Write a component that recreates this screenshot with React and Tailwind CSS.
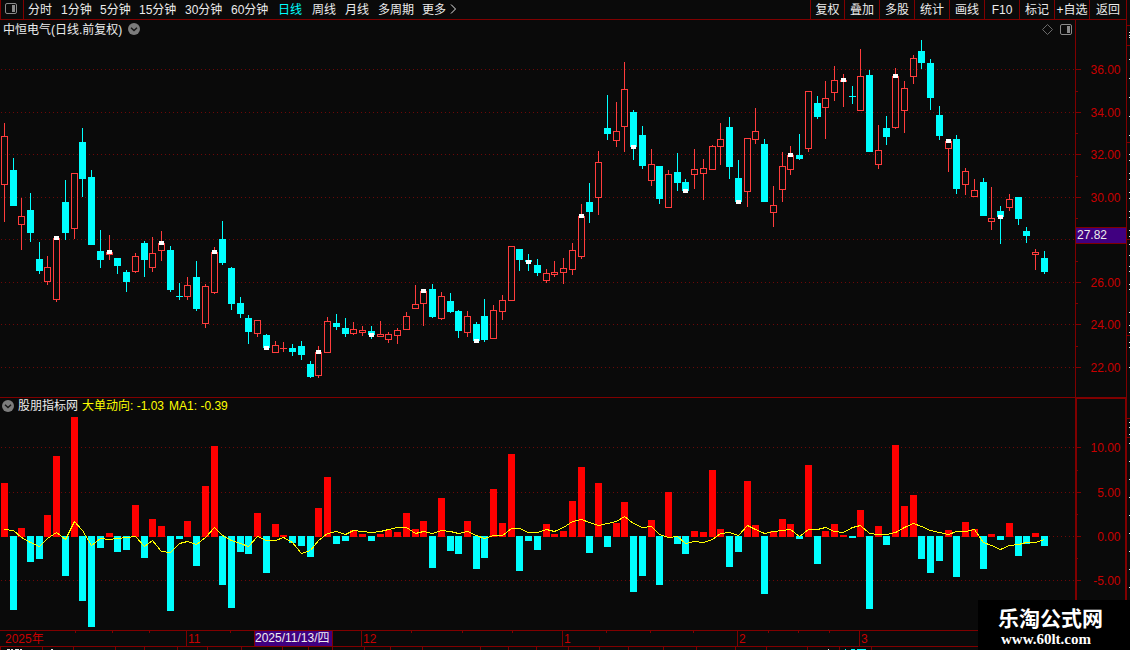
import clsx from 'clsx'

// [direction, high, body top, body bottom, low, marker top]
const CANDLES = [
  ['u', 123, 136, 185, 222], ['d', 158, 170, 206, 206], ['u', 198, 216, 225, 250], ['d', 193, 210, 233, 242],
  ['d', 242, 259, 271, 274], ['u', 256, 267, 282, 285], ['u', 236, 238, 300, 302, 236], ['d', 180, 202, 233, 240],
  ['u', 173, 173, 229, 239], ['d', 128, 142, 179, 197], ['d', 170, 177, 245, 245], ['d', 230, 251, 260, 268],
  ['u', 235, 252, 255, 260, 250], ['d', 258, 258, 266, 274], ['d', 270, 272, 282, 292], ['u', 253, 256, 272, 273],
  ['d', 241, 243, 260, 277], ['u', 237, 253, 268, 272], ['u', 231, 243, 251, 261, 241], ['d', 246, 250, 290, 292],
  ['d', 283, 296, 297, 300], ['u', 277, 285, 297, 300], ['d', 261, 277, 309, 311], ['u', 284, 286, 324, 328],
  ['u', 247, 252, 293, 294, 250], ['d', 221, 239, 263, 265], ['d', 267, 268, 304, 310], ['d', 297, 303, 314, 318],
  ['d', 315, 318, 332, 344], ['u', 320, 320, 334, 337], ['d', 334, 335, 348, 348, 346], ['u', 341, 345, 353, 353],
  ['u', 342, 348, 349, 352], ['d', 344, 348, 352, 356], ['d', 341, 346, 355, 360], ['d', 361, 364, 377, 378],
  ['u', 346, 352, 376, 378, 350], ['u', 317, 321, 353, 353], ['d', 314, 323, 327, 330], ['d', 318, 328, 334, 337],
  ['u', 322, 329, 334, 335], ['u', 326, 330, 333, 336], ['d', 326, 331, 335, 339, 333], ['u', 321, 334, 337, 337],
  ['u', 332, 334, 340, 343], ['u', 328, 330, 336, 344], ['u', 312, 316, 330, 330], ['u', 285, 304, 309, 309],
  ['u', 289, 291, 304, 326, 289], ['d', 284, 289, 317, 318], ['u', 292, 296, 319, 320], ['d', 293, 301, 312, 313],
  ['d', 310, 311, 331, 338], ['u', 311, 316, 333, 337], ['d', 322, 324, 341, 341, 339], ['d', 299, 316, 340, 342],
  ['u', 305, 310, 339, 339], ['u', 295, 300, 312, 320], ['u', 246, 246, 301, 301], ['d', 249, 249, 260, 271],
  ['d', 254, 260, 262, 271, 260], ['d', 259, 265, 273, 276], ['u', 269, 273, 281, 283], ['u', 261, 272, 275, 277],
  ['u', 258, 268, 273, 284], ['u', 243, 250, 270, 275], ['u', 204, 216, 257, 259, 214], ['d', 183, 202, 212, 223],
  ['u', 151, 162, 198, 215], ['d', 95, 128, 134, 140], ['u', 102, 131, 141, 147], ['u', 62, 89, 127, 152],
  ['d', 110, 112, 147, 160, 145], ['d', 126, 135, 166, 169], ['u', 149, 164, 181, 186], ['d', 166, 166, 199, 204],
  ['u', 170, 174, 208, 208], ['d', 153, 172, 183, 191], ['d', 179, 182, 191, 191, 189], ['u', 149, 169, 175, 189],
  ['u', 159, 168, 174, 200], ['u', 145, 146, 170, 170], ['u', 123, 139, 147, 165], ['d', 117, 127, 167, 179],
  ['d', 160, 178, 202, 202, 200], ['u', 138, 138, 192, 207], ['u', 108, 131, 140, 144], ['d', 139, 144, 202, 202],
  ['u', 186, 205, 213, 227], ['u', 152, 166, 190, 202], ['u', 146, 155, 170, 175, 153], ['d', 134, 155, 159, 160],
  ['u', 91, 91, 149, 152], ['d', 96, 103, 117, 119], ['u', 81, 98, 108, 139], ['u', 66, 80, 93, 101],
  ['u', 74, 80, 82, 107, 78], ['d', 86, 96, 97, 104], ['u', 49, 76, 111, 111], ['d', 70, 75, 152, 152],
  ['u', 125, 150, 165, 169], ['d', 116, 128, 137, 145], ['u', 68, 76, 128, 129, 74], ['u', 81, 88, 111, 133],
  ['u', 55, 58, 77, 84], ['d', 40, 51, 63, 69], ['d', 59, 63, 98, 110], ['d', 106, 115, 136, 140],
  ['u', 139, 141, 149, 172, 139], ['d', 135, 139, 189, 194], ['u', 168, 171, 185, 195], ['u', 179, 190, 197, 197],
  ['d', 178, 182, 216, 216], ['u', 187, 218, 222, 230], ['d', 206, 211, 217, 244, 215], ['u', 194, 199, 208, 211],
  ['d', 197, 197, 219, 225], ['d', 227, 231, 236, 243], ['u', 249, 252, 255, 270], ['d', 251, 258, 272, 274],
]

// bar ends: above the zero line is inflow, below is outflow
const BARS = [
  483, 610, 528, 562, 559, 515, 456, 576, 417, 601, 627, 548, 533, 552, 550, 505, 558, 519, 526, 611,
  539, 521, 566, 486, 446, 585, 608, 552, 554, 513, 573, 524, 535, 543, 546, 557, 508, 477, 544, 541,
  530, 534, 541, 534, 530, 532, 513, 529, 521, 568, 498, 551, 554, 521, 569, 558, 489, 523, 454, 571,
  541, 550, 524, 534, 531, 501, 467, 553, 483, 547, 523, 502, 592, 576, 520, 585, 492, 544, 554, 531,
  532, 470, 529, 567, 552, 481, 525, 594, 531, 519, 524, 539, 465, 564, 531, 524, 535, 538, 510, 609,
  526, 545, 445, 506, 495, 559, 573, 561, 530, 577, 522, 529, 569, 534, 540, 523, 556, 544, 533, 546,
]

const MA = [
  529, 530, 537, 542, 546, 538, 532, 539, 521, 530, 545, 538, 539, 538, 537, 536, 546, 540, 551, 552,
  543, 541, 544, 537, 527, 535, 540, 543, 546, 536, 540, 540, 537, 542, 553, 550, 540, 533, 531, 534,
  530, 531, 532, 531, 529, 527, 527, 533, 531, 533, 530, 531, 533, 531, 535, 538, 535, 535, 528, 528,
  532, 532, 529, 531, 527, 521, 519, 522, 525, 523, 521, 516, 523, 527, 526, 534, 537, 536, 543, 541,
  542, 539, 533, 532, 535, 525, 529, 533, 531, 530, 529, 536, 529, 529, 527, 531, 532, 527, 525, 533,
  534, 534, 532, 527, 523, 526, 530, 532, 534, 531, 531, 529, 542, 545, 549, 545, 544, 542, 542, 539,
]

const PERIODS = [
  ['分时', 'w-[33px]'],
  ['1分钟', 'w-[39px]'],
  ['5分钟', 'w-[39px]'],
  ['15分钟', 'w-[46px]'],
  ['30分钟', 'w-[46px]'],
  ['60分钟', 'w-[47px]'],
  ['日线', 'w-[34px]'],
  ['周线', 'w-[33px]'],
  ['月线', 'w-[33px]'],
  ['多周期', 'w-[44px]'],
  ['更多', 'w-[28px]'],
]

const TOOLS = ['复权', '叠加', '多股', '统计', '画线', 'F10', '标记', '+自选', '返回']

const PRICE_TICKS = [[69, '36.00'], [112, '34.00'], [154, '32.00'], [197, '30.00'], [239, ''], [282, '26.00'], [324, '24.00'], [367, '22.00']]
const PRICE_MINOR = [91, 133, 176, 218, 261, 303, 346]
const FLOW_TICKS = [[447, '10.00'], [492, '5.00'], [536, '0.00'], [580, '-5.00']]
const FLOW_MINOR = [470, 514, 558]

const MONTHS = [
  ['2025年', 'w-[186px] pl-[5px]'],
  ['11', 'w-[175px] border-l pl-px'],
  ['12', 'w-[201px] border-l pl-px'],
  ['1', 'w-[175px] border-l pl-px'],
  ['2', 'w-[122px] border-l pl-px'],
  ['3', 'w-[216px] border-l pl-px'],
]
const DATE_TICKS = [75, 112, 149, 230, 411, 462, 512, 606, 650, 693, 768, 798, 829]
const TAB_TICKS = [0, 42, 73, 115, 144, 177, 207, 241, 282, 308, 332, 364, 390, 422, 480, 508, 536, 568, 599, 628, 663, 696, 735, 766, 807, 839, 871]

const EDGE_RED = [25, 45, 142, 239, 335, 418, 437]
const EDGE_WHITE = [
  32, 35, 37, 59, 78, 97, 116, 135, 154, 160, 173, 179, 192, 198, 211, 217, 230, 236, 244, 255, 266, 271, 284, 289,
  312, 325, 332, 342, 347, 367, 422, 427, 434, 443, 461, 479, 497, 515, 533, 551, 569, 587,
]

const cx = (i) => Math.floor(4.29 + i * 8.7395)

function GridLines({ ys }) {
  return ys.map((y) => (
    <line key={y} x1="1" x2="1075" y1={y + 0.5} y2={y + 0.5} stroke="#6e0808" strokeDasharray="1 3" />
  ))
}

function Candle({ x, data }) {
  const [dir, high, top, bottom, low, mark] = data
  const up = dir === 'u'
  const color = up ? '#ff3c3c' : '#00ffff'
  return (
    <g>
      {high < top && <rect x={x} y={high} width="1" height={top - high} fill={color} />}
      {low > bottom && <rect x={x} y={bottom} width="1" height={low - bottom} fill={color} />}
      {up && bottom - top > 2 ? (
        <rect x={x - 2.5} y={top + 0.5} width="6" height={bottom - top - 1} fill="none" stroke={color} />
      ) : (
        <rect x={x - 3} y={top} width="7" height={bottom - top} fill={color} />
      )}
      {mark && <rect x={x - 2} y={mark} width="5" height="4" fill="#fff" />}
    </g>
  )
}

function PriceChart() {
  return (
    <svg className="block" width="1075" height="377" viewBox="0 20 1075 377" shapeRendering="crispEdges">
      <GridLines ys={PRICE_TICKS.map((t) => t[0])} />
      {CANDLES.map((c, i) => (
        <Candle key={i} x={cx(i)} data={c} />
      ))}
    </svg>
  )
}

function FlowChart() {
  return (
    <svg className="block" width="1075" height="232" viewBox="0 398 1075 232" shapeRendering="crispEdges">
      <GridLines ys={FLOW_TICKS.map((t) => t[0])} />
      {BARS.map((y, i) =>
        y < 537 ? (
          <rect key={i} x={cx(i) - 3} y={y} width="7" height={537 - y} fill="#ff0000" />
        ) : (
          <rect key={i} x={cx(i) - 3} y="536" width="7" height={y - 536} fill="#00ffff" />
        )
      )}
      <polyline points={MA.map((y, i) => `${cx(i) + 0.5},${y + 0.5}`).join(' ')} fill="none" stroke="#ffff00" />
    </svg>
  )
}

function Axis({ top, height, ticks, minor, className }) {
  return (
    <svg className={clsx('block shrink-0', className)} width="50" height={height} viewBox={`0 ${top} 50 ${height}`}>
      {ticks.map(([y, label]) => (
        <g key={y}>
          <rect x="0" y={y} width="5" height="1" fill="#800000" />
          <text x="44.5" y={y + 5} textAnchor="end" fontSize="12" fill="#c80000">{label}</text>
        </g>
      ))}
      {minor.map((y) => (
        <rect key={y} x="0" y={y} width="2" height="1" fill="#800000" />
      ))}
    </svg>
  )
}

function PanelIcon({ color, className }) {
  return (
    <svg className={className} width="12" height="11" viewBox="0 0 12 11">
      <rect x="0.5" y="0.5" width="11" height="10" rx="1.5" fill="none" stroke={color} />
      <rect x="7" y="2" width="3" height="7" fill={color} />
    </svg>
  )
}

function Dropdown({ className }) {
  return (
    <svg className={className} width="12" height="12" viewBox="0 0 12 12">
      <circle cx="6" cy="6" r="6" fill="#7c7c7c" />
      <path d="M3 4.8 L6 7.6 L9 4.8" fill="none" stroke="#161616" strokeWidth="1.4" />
    </svg>
  )
}

export default function App() {
  return (
    <div className="relative flex h-[650px] w-[1130px] overflow-hidden bg-[#0a0a0a] font-['Liberation_Sans','Noto_Sans_CJK_SC',sans-serif] text-[12px] leading-none text-[#ececec]">
      <div className="flex w-[1127px] shrink-0 flex-col">
        <header className="flex h-[20px] shrink-0 border-b border-r border-[#800000] whitespace-nowrap">
          <div className="flex w-[24px] shrink-0 border-x border-[#800000] pt-[3px] pl-[4px]">
            <PanelIcon color="#8a8a8a" />
          </div>
          <nav className="flex flex-1 items-center pl-[4px]">
            {PERIODS.map(([name, w]) => (
              <span key={name} className={clsx('shrink-0', w, name === '日线' && 'text-[#00ffff]')}>
                {name}
              </span>
            ))}
            <svg className="mb-[2px]" width="7" height="10" viewBox="0 0 7 10">
              <path d="M1 0.5 L5.5 5 L1 9.5" fill="none" stroke="#e4e4e4" />
            </svg>
          </nav>
          <div className="flex w-[316px]">
            {TOOLS.map((t, i) => (
              <div
                key={t}
                className={clsx(
                  'flex shrink-0 items-center justify-center border-l border-[#800000]',
                  i === 0 ? 'w-[34px]' : i === 8 ? 'w-[37px]' : 'w-[35px]'
                )}
              >
                {t}
              </div>
            ))}
          </div>
        </header>

        <section className="flex h-[378px] shrink-0 border-b border-[#800000]">
          <div className="relative w-[1075px] shrink-0">
            <PriceChart />
            <div className="absolute top-0 left-0 flex h-[19px] w-full items-center pl-[3px] whitespace-nowrap">
              <span>中恒电气(日线.前复权)</span>
              <Dropdown className="mb-px ml-[6px]" />
              <svg className="ml-auto" width="11" height="11" viewBox="0 0 11 11">
                <path d="M5.5 0.5 L10.5 5.5 L5.5 10.5 L0.5 5.5 Z" fill="none" stroke="#6a6a6a" />
              </svg>
              <PanelIcon color="#8a8a8a" className="mr-[3px] ml-[7px]" />
            </div>
          </div>
          <div className="relative w-[52px] border-x border-[#800000]">
            <Axis top={20} height={377} ticks={PRICE_TICKS} minor={PRICE_MINOR} />
            <div className="absolute top-[207px] left-0 flex h-[17px] w-[50px] items-center border-y border-[#800000] bg-[#400080] pb-px pl-px">
              27.82
            </div>
          </div>
        </section>

        <section className="flex h-[232px] shrink-0">
          <div className="relative w-[1075px] shrink-0">
            <FlowChart />
            <div className="absolute top-0 left-0 flex h-[16px] items-center pl-[2px] whitespace-nowrap">
              <Dropdown />
              <span className="ml-[4px]">股朋指标网</span>
              <span className="ml-[4px] text-[#ffff00]">大单动向: -1.03</span>
              <span className="ml-[5px] text-[#ffff00]">MA1: -0.39</span>
            </div>
          </div>
          <div className="w-[52px] border-x-2 border-t border-[#800000]">
            <Axis top={399} height={231} ticks={FLOW_TICKS} minor={FLOW_MINOR} className="-ml-px" />
          </div>
        </section>

        <div className="relative flex h-[17px] shrink-0 border-y border-[#800000] text-[#c80000]">
          {MONTHS.map(([m, cls]) => (
            <div key={m} className={clsx('flex shrink-0 items-center border-[#800000] pt-px', cls)}>
              {m}
            </div>
          ))}
          <svg className="absolute top-0 left-0" width="977" height="15">
            {DATE_TICKS.map((x) => (
              <rect key={x} x={x} y="0" width="1" height="2" fill="#800000" />
            ))}
          </svg>
          <div className="absolute top-0 left-[254px] flex h-[15px] w-[79px] items-center border-x border-[#800000] bg-[#400080] pb-px whitespace-nowrap text-[#f0f0f0]">
            2025/11/13/四
          </div>
        </div>

        <svg className="block" width="977" height="3" shapeRendering="crispEdges">
          {TAB_TICKS.map((x) => (
            <rect key={x} x={x} y="0" width="1" height="3" fill="#800000" />
          ))}
          {[[7, 3], [11, 2], [15, 4], [20, 2], [51, 2], [828, 1]].map(([x, w]) => (
            <rect key={x} x={x} y="2" width={w} height="1" fill="#e4e4e4" />
          ))}
          {[[845, 1], [851, 4], [857, 9]].map(([x, w]) => (
            <rect key={x} x={x} y="2" width={w} height="1" fill="#00ffff" />
          ))}
        </svg>
      </div>

      <svg className="block shrink-0" width="3" height="650" shapeRendering="crispEdges">
        {EDGE_RED.map((y) => (
          <rect key={y} x="0" y={y} width="3" height="1" fill="#800000" />
        ))}
        {EDGE_WHITE.map((y) => (
          <rect key={y} x="2" y={y} width="1" height="1" fill="#e4e4e4" />
        ))}
      </svg>

      <div className="absolute right-0 bottom-0 flex h-[50px] w-[152px] flex-col bg-black whitespace-nowrap text-white">
        <div className="mt-[8px] pl-[20px] text-[21px] font-bold">乐淘公式网</div>
        <div className="mt-[3px] pl-[23px] font-['Liberation_Serif',serif] text-[15px] font-bold">www.60lt.com</div>
      </div>
    </div>
  )
}
